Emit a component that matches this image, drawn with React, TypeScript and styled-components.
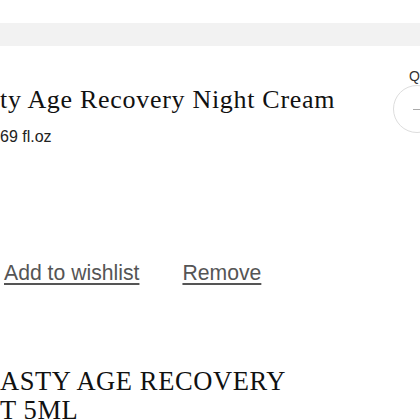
import React from "react"
import styled, { createGlobalStyle } from "styled-components"

const GlobalStyle = createGlobalStyle`
  html, body {
    margin: 0;
    padding: 0;
    background: #fff;
    overflow: hidden;
  }
  body {
    width: 420px;
    height: 420px;
  }
`

const Page = styled.div`
  width: 420px;
  height: 420px;
  overflow: hidden;
  display: flex;
  flex-direction: column;
  & > * {
    flex-shrink: 0;
  }
`

const Banner = styled.div`
  margin-top: 23px;
  height: 23px;
  background: #f2f2f2;
`

const CartRow = styled.div`
  display: flex;
  justify-content: space-between;
  padding-top: 21px;
  height: 290px;
`

const Details = styled.div`
  display: flex;
  flex-direction: column;
  padding-top: 14px;
`

const Title = styled.h2`
  margin: 0;
  font-family: "Liberation Serif", "DejaVu Serif", serif;
  font-weight: 400;
  font-size: 26px;
  line-height: 38px;
  letter-spacing: 0.7px;
  color: #111;
  white-space: nowrap;
`

const Size = styled.div`
  font-family: "Liberation Sans", Arial, sans-serif;
  font-size: 16px;
  line-height: 20px;
  color: #222;
  margin-top: 8px;
`

const Actions = styled.div`
  display: flex;
  gap: 43px;
  margin-top: 113px;
  padding-left: 4px;
`

const ActionLink = styled.a`
  font-family: "Liberation Sans", Arial, sans-serif;
  font-size: 21.2px;
  line-height: 26px;
  color: #555;
  text-decoration: underline;
  text-underline-offset: 3px;
  cursor: pointer;
`

const Quantity = styled.div`
  display: flex;
  flex-direction: column;
  align-items: flex-start;
  width: 27px;
  overflow: hidden;
  flex-shrink: 0;
`

const QtyLabel = styled.div`
  font-family: "Liberation Sans", Arial, sans-serif;
  font-size: 14px;
  line-height: 18px;
  color: #333;
  padding-left: 16px;
`

const Stepper = styled.div`
  display: flex;
  align-items: center;
  width: 48px;
  height: 48px;
  border: 1px solid #ddd;
  border-radius: 50%;
  box-sizing: border-box;
  flex-shrink: 0;
  padding-left: 19px;
`

const Minus = styled.span`
  width: 12px;
  height: 1px;
  background: #aaa;
`

const UpsellTitle = styled.h3`
  margin: 10px 0 0;
  font-family: "Liberation Serif", "DejaVu Serif", serif;
  font-weight: 400;
  font-size: 26.5px;
  line-height: 29px;
  letter-spacing: 0.6px;
  color: #111;
  white-space: nowrap;
  text-transform: uppercase;
`

export default function App() {
  return (
    <Page>
      <GlobalStyle />
      <Banner />
      <CartRow>
        <Details>
          <Title>ty Age Recovery Night Cream</Title>
          <Size>69 fl.oz</Size>
          <Actions>
            <ActionLink>Add to wishlist</ActionLink>
            <ActionLink>Remove</ActionLink>
          </Actions>
        </Details>
        <Quantity>
          <QtyLabel>Q</QtyLabel>
          <Stepper>
            <Minus />
          </Stepper>
        </Quantity>
      </CartRow>
      <UpsellTitle>
        asty age recovery
        <br />t 5ml
      </UpsellTitle>
    </Page>
  )
}
